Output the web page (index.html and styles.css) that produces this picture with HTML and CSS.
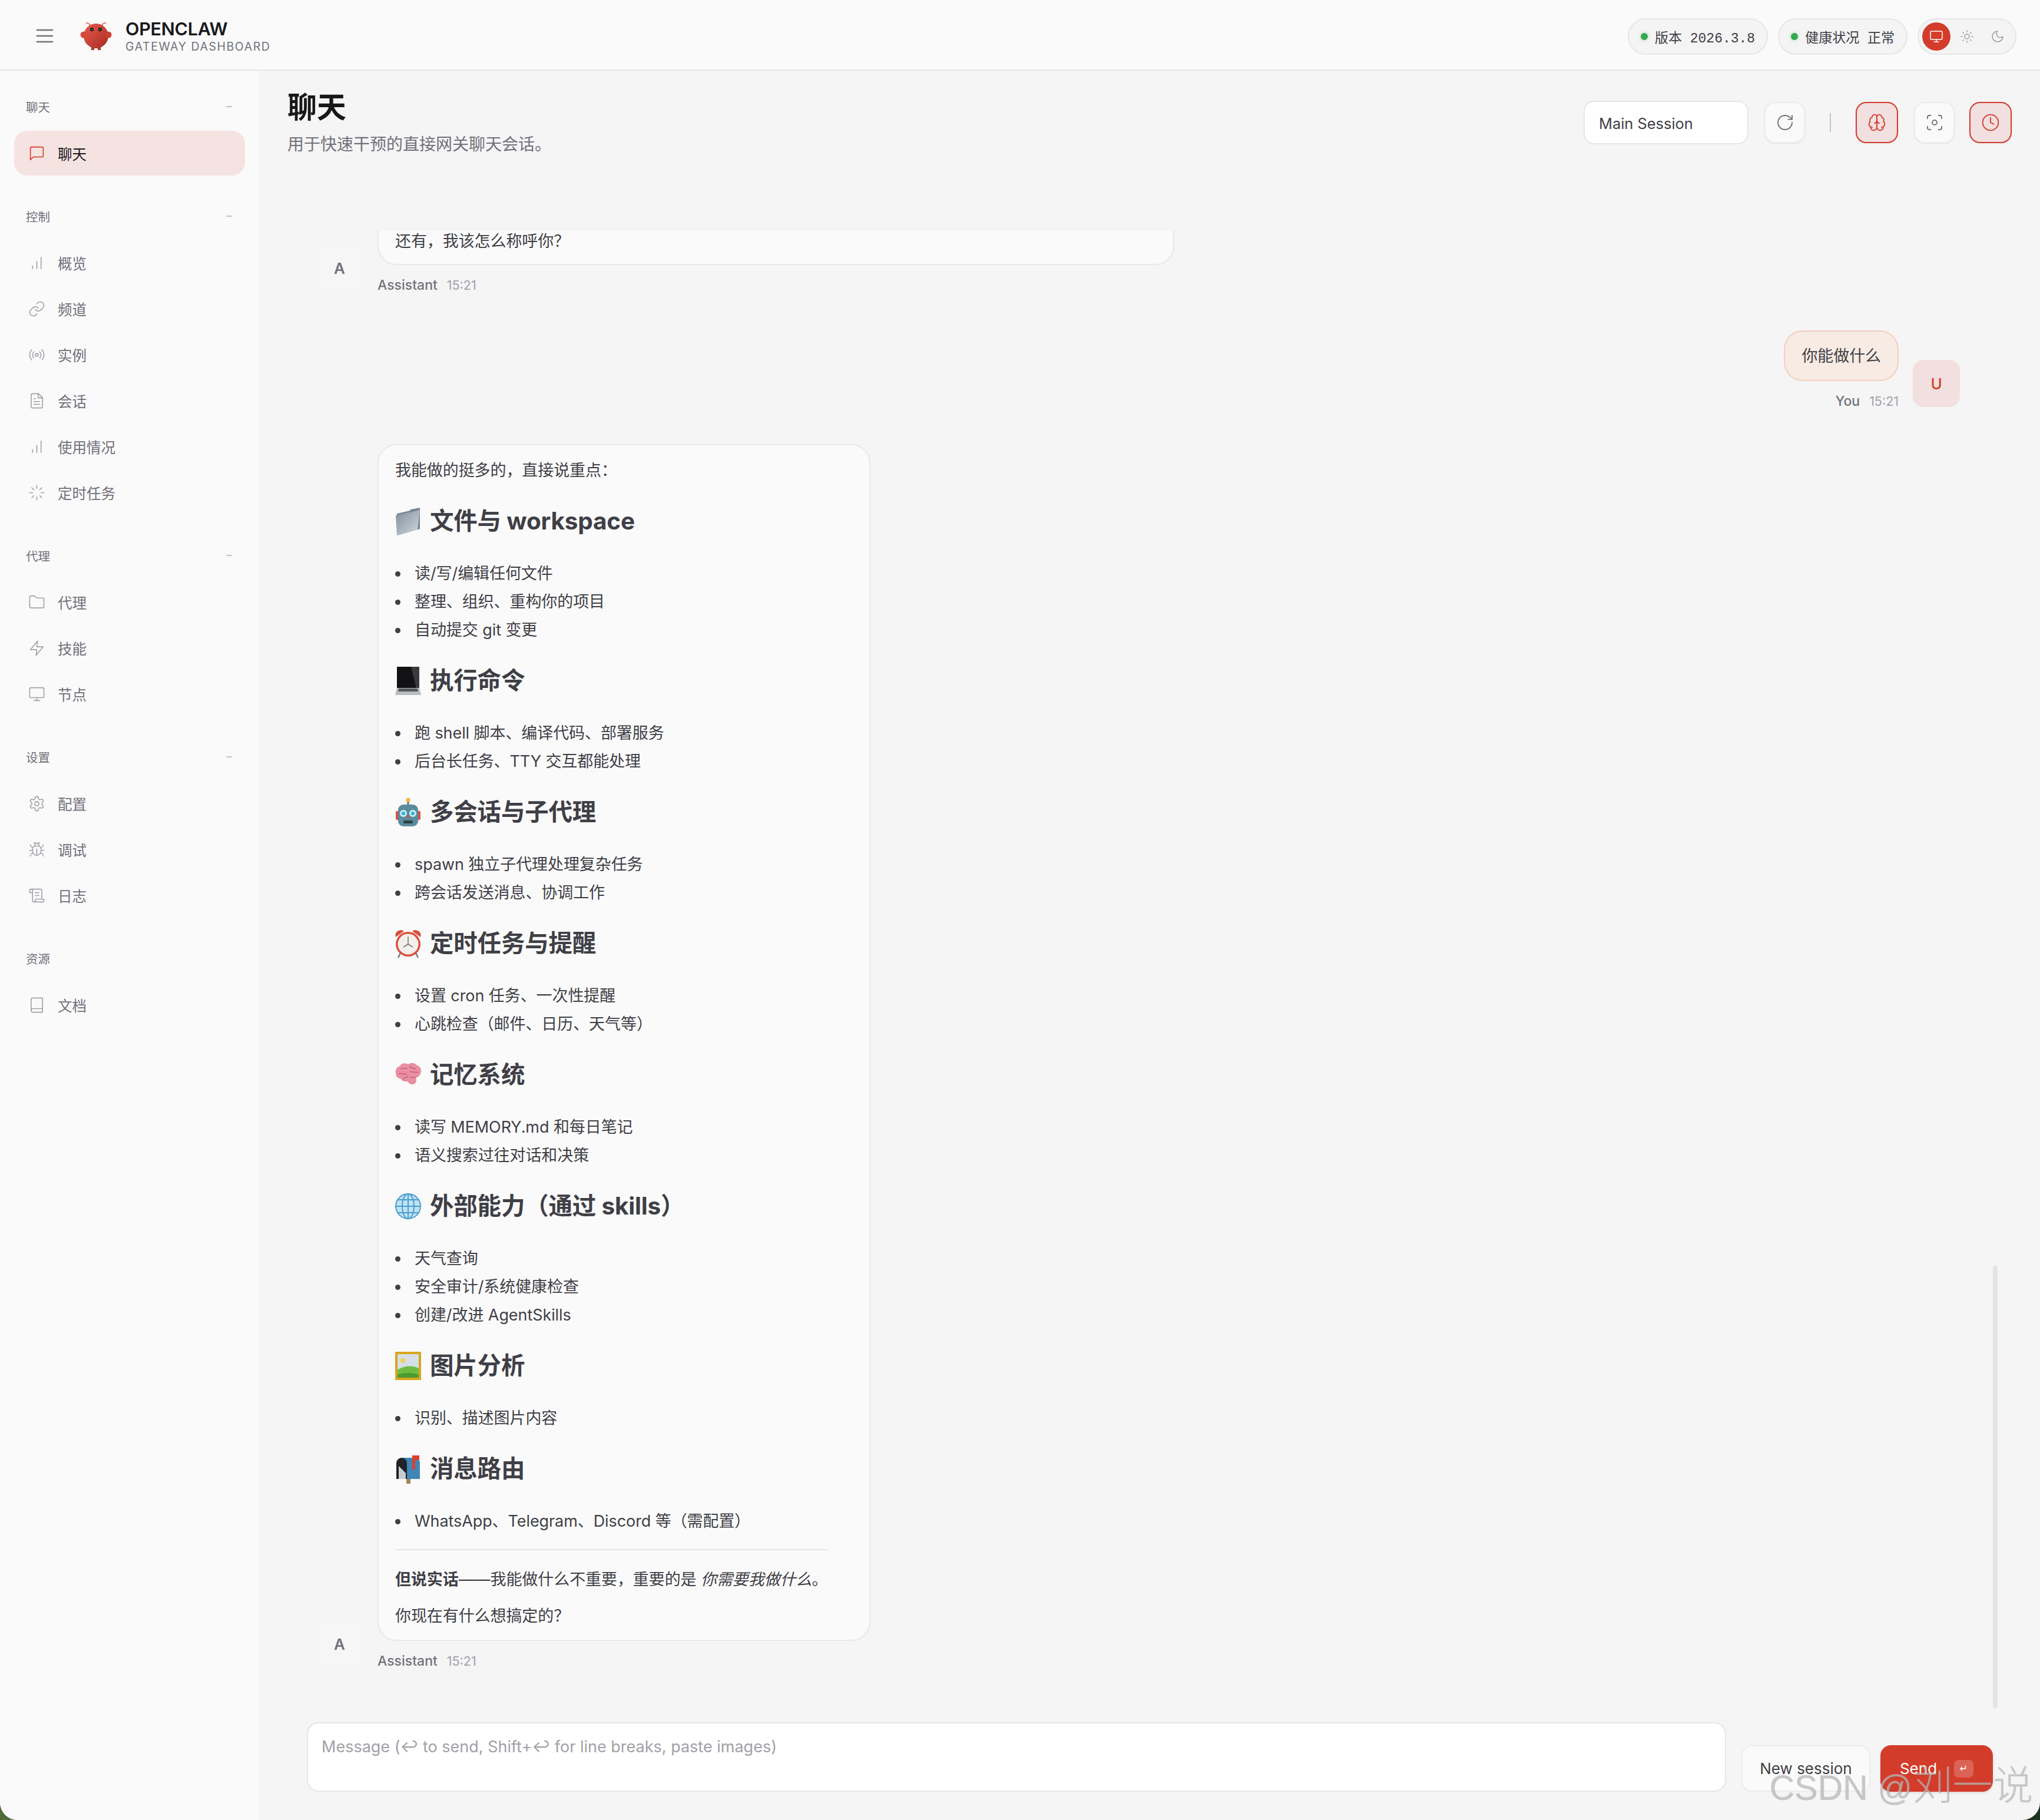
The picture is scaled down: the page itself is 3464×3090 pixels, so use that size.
FILE: index.html
```html
<!DOCTYPE html>
<html lang="zh-CN">
<head>
  <meta charset="UTF-8">
  <meta name="viewport" content="width=device-width, initial-scale=1.0">
  <title>OpenClaw</title>
  <link rel="stylesheet" href="styles.css">
</head>
<body>
  <svg class="sprite" xmlns="http://www.w3.org/2000/svg">
    <symbol id="i-menu" viewBox="0 0 24 24"><path d="M4 6h16M4 12h16M4 18h16"/></symbol>
    <symbol id="i-chat" viewBox="0 0 24 24"><path d="M21 15a2 2 0 0 1-2 2H7l-4 4V5a2 2 0 0 1 2-2h14a2 2 0 0 1 2 2z"/></symbol>
    <symbol id="i-bars" viewBox="0 0 24 24"><path d="M12 20V10M18 20V4M6 20v-4"/></symbol>
    <symbol id="i-link" viewBox="0 0 24 24"><path d="M10 13a5 5 0 0 0 7.54.54l3-3a5 5 0 0 0-7.07-7.07l-1.72 1.71"/><path d="M14 11a5 5 0 0 0-7.54-.54l-3 3a5 5 0 0 0 7.07 7.07l1.71-1.71"/></symbol>
    <symbol id="i-radio" viewBox="0 0 24 24"><path d="M4.9 19.1C1 15.2 1 8.8 4.9 4.9"/><path d="M7.8 16.2c-2.3-2.3-2.3-6.1 0-8.5"/><circle cx="12" cy="12" r="2"/><path d="M16.2 7.8c2.3 2.3 2.3 6.1 0 8.5"/><path d="M19.1 4.9C23 8.8 23 15.1 19.1 19"/></symbol>
    <symbol id="i-file" viewBox="0 0 24 24"><path d="M14.5 2H6a2 2 0 0 0-2 2v16a2 2 0 0 0 2 2h12a2 2 0 0 0 2-2V7.5L14.5 2z"/><path d="M14 2v6h6M16 13H8M16 17H8M10 9H8"/></symbol>
    <symbol id="i-loader" viewBox="0 0 24 24"><path d="M12 2v4M12 18v4M4.93 4.93l2.83 2.83M16.24 16.24l2.83 2.83M2 12h4M18 12h4M4.93 19.07l2.83-2.83M16.24 7.76l2.83-2.83"/></symbol>
    <symbol id="i-folder" viewBox="0 0 24 24"><path d="M20 20a2 2 0 0 0 2-2V8a2 2 0 0 0-2-2h-7.93a2 2 0 0 1-1.66-.9l-.82-1.2A2 2 0 0 0 7.93 3H4a2 2 0 0 0-2 2v13c0 1.1.9 2 2 2Z"/></symbol>
    <symbol id="i-zap" viewBox="0 0 24 24"><path d="M13 2 3 14h9l-1 8 10-12h-9l1-8z"/></symbol>
    <symbol id="i-monitor" viewBox="0 0 24 24"><rect x="2" y="3" width="20" height="14" rx="2"/><path d="M8 21h8M12 17v4"/></symbol>
    <symbol id="i-gear" viewBox="0 0 24 24"><path d="M12.22 2h-.44a2 2 0 0 0-2 2v.18a2 2 0 0 1-1 1.73l-.43.25a2 2 0 0 1-2 0l-.15-.08a2 2 0 0 0-2.73.73l-.22.38a2 2 0 0 0 .73 2.73l.15.1a2 2 0 0 1 1 1.72v.51a2 2 0 0 1-1 1.74l-.15.09a2 2 0 0 0-.73 2.73l.22.38a2 2 0 0 0 2.73.73l.15-.08a2 2 0 0 1 2 0l.43.25a2 2 0 0 1 1 1.73V20a2 2 0 0 0 2 2h.44a2 2 0 0 0 2-2v-.18a2 2 0 0 1 1-1.73l.43-.25a2 2 0 0 1 2 0l.15.08a2 2 0 0 0 2.73-.73l.22-.39a2 2 0 0 0-.73-2.73l-.15-.08a2 2 0 0 1-1-1.74v-.5a2 2 0 0 1 1-1.74l.15-.09a2 2 0 0 0 .73-2.73l-.22-.38a2 2 0 0 0-2.73-.73l-.15.08a2 2 0 0 1-2 0l-.43-.25a2 2 0 0 1-1-1.73V4a2 2 0 0 0-2-2z"/><circle cx="12" cy="12" r="3"/></symbol>
    <symbol id="i-bug" viewBox="0 0 24 24"><path d="m8 2 1.88 1.88M14.12 3.88 16 2M9 7.13v-1a3.003 3.003 0 1 1 6 0v1"/><path d="M12 20c-3.3 0-6-2.7-6-6v-3a4 4 0 0 1 4-4h4a4 4 0 0 1 4 4v3c0 3.3-2.7 6-6 6M12 20v-9"/><path d="M6.53 9C4.6 8.8 3 7.1 3 5M6 13H2M3 21c0-2.1 1.7-3.9 3.8-4M20.97 5c0 2.1-1.6 3.8-3.5 4M22 13h-4M17.2 17c2.1.1 3.8 1.9 3.8 4"/></symbol>
    <symbol id="i-scroll" viewBox="0 0 24 24"><path d="M15 12h-5M15 8h-5M19 17V5a2 2 0 0 0-2-2H4"/><path d="M8 21h12a2 2 0 0 0 2-2v-1a1 1 0 0 0-1-1H11a1 1 0 0 0-1 1v1a2 2 0 1 1-4 0V5a2 2 0 1 0-4 0v2a1 1 0 0 0 1 1h3"/></symbol>
    <symbol id="i-book" viewBox="0 0 24 24"><path d="M4 19.5v-15A2.5 2.5 0 0 1 6.5 2H20v20H6.5a2.5 2.5 0 0 1 0-5H20"/></symbol>
    <symbol id="i-sun" viewBox="0 0 24 24"><circle cx="12" cy="12" r="4"/><path d="M12 2v2M12 20v2M4.93 4.93l1.41 1.41M17.66 17.66l1.41 1.41M2 12h2M20 12h2M6.34 17.66l-1.41 1.41M19.07 4.93l-1.41 1.41"/></symbol>
    <symbol id="i-moon" viewBox="0 0 24 24"><path d="M12 3a6 6 0 0 0 9 9 9 9 0 1 1-9-9Z"/></symbol>
    <symbol id="i-refresh" viewBox="0 0 24 24"><path d="M21 12a9 9 0 1 1-9-9c2.52 0 4.93 1 6.74 2.74L21 8"/><path d="M21 3v5h-5"/></symbol>
    <symbol id="i-brain" viewBox="0 0 24 24"><path d="M12 5a3 3 0 1 0-5.997.125 4 4 0 0 0-2.526 5.77 4 4 0 0 0 .556 6.588A4 4 0 1 0 12 18Z"/><path d="M12 5a3 3 0 1 1 5.997.125 4 4 0 0 1 2.526 5.77 4 4 0 0 1-.556 6.588A4 4 0 1 1 12 18Z"/><path d="M15 13a4.5 4.5 0 0 1-3-4 4.5 4.5 0 0 1-3 4M12 18V9M6 18a4 4 0 0 1-1.967-.516M19.967 17.484A4 4 0 0 1 18 18"/></symbol>
    <symbol id="i-focus" viewBox="0 0 24 24"><path d="M3 7V5a2 2 0 0 1 2-2h2M17 3h2a2 2 0 0 1 2 2v2M21 17v2a2 2 0 0 1-2 2h-2M7 21H5a2 2 0 0 1-2-2v-2"/><circle cx="12" cy="12" r="3"/></symbol>
    <symbol id="i-clock" viewBox="0 0 24 24"><circle cx="12" cy="12" r="10"/><path d="M12 6v6l4 2"/></symbol>
    <linearGradient id="logo-fill" x1="0" y1="0" x2="1" y2="1"><stop offset="0" stop-color="#ea5a4b"/><stop offset="1" stop-color="#a42c22"/></linearGradient>
    <linearGradient id="folder-fill" x1="0" y1="0" x2="1" y2="1"><stop offset="0" stop-color="#7f8c9a"/><stop offset="1" stop-color="#d3dae1"/></linearGradient>
    <symbol id="e-folder" viewBox="0 0 44 50"><path d="M3 12l22-5 1-2 16-3v36L3 49z" fill="#78848f"/><path d="M1 15l41-9-4 33L3 49z" fill="url(#folder-fill)"/></symbol>
    <symbol id="e-laptop" viewBox="0 0 44 50"><path d="M3 1h38v37H3z" fill="#121214"/><path d="M27 1h14v37H36z" fill="#3a3a3e"/><path d="M3 37h38l3 12H0z" fill="#b9bbbe"/><path d="M6 38h32l1 5H5z" fill="#55575a"/></symbol>
    <symbol id="e-robot" viewBox="0 0 44 50"><rect x="20" y="4" width="4" height="9" fill="#8a8a8a"/><circle cx="22" cy="4" r="3.5" fill="#f2b53c"/><rect x="1" y="23" width="6" height="15" rx="2" fill="#d9503f"/><rect x="37" y="23" width="6" height="15" rx="2" fill="#d9503f"/><rect x="5" y="12" width="34" height="37" rx="9" fill="#5b8b9c"/><circle cx="14" cy="27" r="6" fill="#c8eef7"/><circle cx="30" cy="27" r="6" fill="#c8eef7"/><circle cx="14" cy="27" r="3" fill="#2fb1d6"/><circle cx="30" cy="27" r="3" fill="#2fb1d6"/><path d="M22 29l3 5h-6z" fill="#d9503f"/><rect x="14" y="39" width="16" height="5" rx="2" fill="#2d3f47"/></symbol>
    <symbol id="e-alarm" viewBox="0 0 44 50"><path d="M1 14a9 9 0 0 1 14-10zM43 14a9 9 0 0 0-14-10z" fill="#d9503f"/><path d="M9 41l-4 8M35 41l4 8" stroke="#777" stroke-width="2.5"/><circle cx="22" cy="26" r="21" fill="#d9503f"/><circle cx="22" cy="26" r="17.5" fill="#f3efec"/><path d="M22 13v13l-8 5M22 26l8 5" stroke="#777" stroke-width="1.6" fill="none"/></symbol>
    <symbol id="e-brain" viewBox="0 0 44 50"><path d="M22 7c-5-3-12-2-14 3-5 1-8 6-7 12 0 6 4 9 9 10 2 4 7 5 11 4 3 5 9 7 13 3 3-3 2-7 1-9 5-1 9-6 9-12 0-6-4-9-8-10-3-4-9-4-14-1z" fill="#ea8fa3"/><path d="M9 15c4-3 8 0 12-1M6 23c5-2 9 2 14 0M13 32c3-3 7-2 9-5M24 10c2 4 8 3 11 5M25 20c4-2 8 2 14 0M26 29c3-1 6 1 9 0" stroke="#c75f7a" stroke-width="1.5" fill="none"/></symbol>
    <symbol id="e-globe" viewBox="0 0 44 50"><circle cx="22" cy="25" r="21" fill="#bfe3f5"/><g fill="none" stroke="#4a9ccd" stroke-width="2"><circle cx="22" cy="25" r="21"/><ellipse cx="22" cy="25" rx="10" ry="21"/><path d="M22 4v42M1 25h42M4 14h36M4 36h36"/></g></symbol>
    <symbol id="e-picture" viewBox="0 0 44 50"><rect x="0" y="1" width="44" height="48" fill="#d9a520"/><rect x="4" y="5" width="36" height="40" fill="#d5dfe6"/><circle cx="13" cy="16" r="4" fill="#f3d24c"/><path d="M4 32c9-7 24-9 36-3v16H4z" fill="#6ebb3f"/><path d="M4 40c12-4 24-4 36 0v5H4z" fill="#4b9a2e"/></symbol>
    <symbol id="e-mailbox" viewBox="0 0 44 50"><rect x="19" y="38" width="7" height="12" fill="#a8844f"/><path d="M13 6h20a9 9 0 0 1 9 9v27H13z" fill="#3f86b4"/><path d="M2 15a9 9 0 0 1 18 0v27H2z" fill="#1e2328"/><path d="M6 20l12 12v10H6z" fill="#c9ccd0"/><rect x="29" y="2" width="5" height="24" fill="#d9402f"/><rect x="29" y="2" width="12" height="8" fill="#d9402f"/></symbol>
  </svg>

  <div id="root">
    <header class="topbar">
      <div class="brand">
        <svg class="icon menu-icon"><use href="#i-menu"/></svg>
        <svg class="logo" viewBox="0 0 54 50">
          <path d="M17 7c-1-3-4-4-7-4M37 7c1-3 4-4 7-4" fill="none" stroke="#d9503f" stroke-width="1.5"/>
          <rect x="19" y="40" width="5" height="9" fill="#b5352a"/>
          <rect x="30" y="40" width="5" height="9" fill="#b5352a"/>
          <circle cx="27" cy="25" r="21" fill="url(#logo-fill)"/>
          <circle cx="6" cy="23" r="5.5" fill="#d9473a"/>
          <circle cx="48" cy="23" r="5.5" fill="#c83f32"/>
          <circle cx="20" cy="14" r="3" fill="#111"/><circle cx="34" cy="14" r="3" fill="#111"/>
          <circle cx="20" cy="14" r="1.1" fill="#35d6d6"/><circle cx="34" cy="14" r="1.1" fill="#35d6d6"/>
        </svg>
        <div class="brand-text">
          <div class="brand-name">OPENCLAW</div>
          <div class="brand-sub">GATEWAY DASHBOARD</div>
        </div>
      </div>
      <div class="top-status">
        <div class="pill"><span class="dot"></span><span>版本 2026.3.8</span></div>
        <div class="pill"><span class="dot"></span><span>健康状况 正常</span></div>
        <div class="pill theme-pill">
          <span class="theme-btn active"><svg class="icon"><use href="#i-monitor"/></svg></span>
          <span class="theme-btn"><svg class="icon"><use href="#i-sun"/></svg></span>
          <span class="theme-btn"><svg class="icon"><use href="#i-moon"/></svg></span>
        </div>
      </div>
    </header>

    <div class="layout">
      <nav class="sidebar">
        <div class="nav-group">
          <div class="nav-label"><span>聊天</span><i class="collapse"></i></div>
          <a class="nav-item active"><svg class="icon"><use href="#i-chat"/></svg>聊天</a>
        </div>
        <div class="nav-group">
          <div class="nav-label"><span>控制</span><i class="collapse"></i></div>
          <a class="nav-item"><svg class="icon"><use href="#i-bars"/></svg>概览</a>
          <a class="nav-item"><svg class="icon"><use href="#i-link"/></svg>频道</a>
          <a class="nav-item"><svg class="icon"><use href="#i-radio"/></svg>实例</a>
          <a class="nav-item"><svg class="icon"><use href="#i-file"/></svg>会话</a>
          <a class="nav-item"><svg class="icon"><use href="#i-bars"/></svg>使用情况</a>
          <a class="nav-item"><svg class="icon"><use href="#i-loader"/></svg>定时任务</a>
        </div>
        <div class="nav-group">
          <div class="nav-label"><span>代理</span><i class="collapse"></i></div>
          <a class="nav-item"><svg class="icon"><use href="#i-folder"/></svg>代理</a>
          <a class="nav-item"><svg class="icon"><use href="#i-zap"/></svg>技能</a>
          <a class="nav-item"><svg class="icon"><use href="#i-monitor"/></svg>节点</a>
        </div>
        <div class="nav-group">
          <div class="nav-label"><span>设置</span><i class="collapse"></i></div>
          <a class="nav-item"><svg class="icon"><use href="#i-gear"/></svg>配置</a>
          <a class="nav-item"><svg class="icon"><use href="#i-bug"/></svg>调试</a>
          <a class="nav-item"><svg class="icon"><use href="#i-scroll"/></svg>日志</a>
        </div>
        <div class="nav-group">
          <div class="nav-label"><span>资源</span></div>
          <a class="nav-item"><svg class="icon"><use href="#i-book"/></svg>文档</a>
        </div>
      </nav>

      <main class="main">
        <div class="page-head">
          <div>
            <h1 class="page-title">聊天</h1>
            <div class="page-sub">用于快速干预的直接网关聊天会话。</div>
          </div>
          <div class="page-tools">
            <div class="session-select">Main Session</div>
            <button class="tool-btn"><svg class="icon"><use href="#i-refresh"/></svg></button>
            <span class="tool-sep"></span>
            <button class="tool-btn on"><svg class="icon"><use href="#i-brain"/></svg></button>
            <button class="tool-btn"><svg class="icon"><use href="#i-focus"/></svg></button>
            <button class="tool-btn on"><svg class="icon"><use href="#i-clock"/></svg></button>
          </div>
        </div>

        <div class="thread">
          <div class="msg">
            <div class="avatar">A</div>
            <div class="msg-body">
              <div class="bubble bubble-wide"><p>还有，我该怎么称呼你？</p></div>
              <div class="meta"><span class="meta-name">Assistant</span><span class="meta-time">15:21</span></div>
            </div>
          </div>

          <div class="msg msg-user">
            <div class="msg-body">
              <div class="bubble bubble-user">你能做什么</div>
              <div class="meta"><span class="meta-name">You</span><span class="meta-time">15:21</span></div>
            </div>
            <div class="avatar avatar-user">U</div>
          </div>

          <div class="msg">
            <div class="avatar">A</div>
            <div class="msg-body">
              <div class="bubble bubble-long">
                <p>我能做的挺多的，直接说重点：</p>
                <h2><svg class="emoji"><use href="#e-folder"/></svg><span>文件与 workspace</span></h2>
                <ul>
                  <li>读/写/编辑任何文件</li>
                  <li>整理、组织、重构你的项目</li>
                  <li>自动提交 git 变更</li>
                </ul>
                <h2><svg class="emoji"><use href="#e-laptop"/></svg><span>执行命令</span></h2>
                <ul>
                  <li>跑 shell 脚本、编译代码、部署服务</li>
                  <li>后台长任务、TTY 交互都能处理</li>
                </ul>
                <h2><svg class="emoji"><use href="#e-robot"/></svg><span>多会话与子代理</span></h2>
                <ul>
                  <li>spawn 独立子代理处理复杂任务</li>
                  <li>跨会话发送消息、协调工作</li>
                </ul>
                <h2><svg class="emoji"><use href="#e-alarm"/></svg><span>定时任务与提醒</span></h2>
                <ul>
                  <li>设置 cron 任务、一次性提醒</li>
                  <li>心跳检查（邮件、日历、天气等）</li>
                </ul>
                <h2><svg class="emoji"><use href="#e-brain"/></svg><span>记忆系统</span></h2>
                <ul>
                  <li>读写 MEMORY.md 和每日笔记</li>
                  <li>语义搜索过往对话和决策</li>
                </ul>
                <h2><svg class="emoji"><use href="#e-globe"/></svg><span>外部能力（通过 skills）</span></h2>
                <ul>
                  <li>天气查询</li>
                  <li>安全审计/系统健康检查</li>
                  <li>创建/改进 AgentSkills</li>
                </ul>
                <h2><svg class="emoji"><use href="#e-picture"/></svg><span>图片分析</span></h2>
                <ul>
                  <li>识别、描述图片内容</li>
                </ul>
                <h2><svg class="emoji"><use href="#e-mailbox"/></svg><span>消息路由</span></h2>
                <ul>
                  <li>WhatsApp、Telegram、Discord 等（需配置）</li>
                </ul>
                <hr>
                <p><strong>但说实话</strong>——我能做什么不重要，重要的是 <em>你需要我做什么</em>。</p>
                <p>你现在有什么想搞定的？</p>
              </div>
              <div class="meta"><span class="meta-name">Assistant</span><span class="meta-time">15:21</span></div>
            </div>
          </div>
        </div>

        <div class="composer">
          <div class="composer-input">Message (↩ to send, Shift+↩ for line breaks, paste images)</div>
          <button class="btn">New session</button>
          <button class="btn btn-send">Send<kbd>↵</kbd></button>
        </div>

        <div class="scroll-thumb"></div>
      </main>
    </div>

    <div class="watermark">CSDN @<span class="watermark-cjk">刘一说</span></div>
  </div>
</body>
</html>
```

FILE: styles.css
```css
* {
  box-sizing: border-box;
}
html, body {
  margin: 0;
  padding: 0;
  height: 100%;
}
body {
  background: linear-gradient(90deg, #4f6b38, #1d3320);
  font-family: Inter, "Noto Sans CJK SC", sans-serif;
  color: #3f3f46;
}
.sprite {
  position: absolute;
  width: 0;
  height: 0;
}
.icon {
  width: 26px;
  height: 26px;
  flex: none;
  fill: none;
  stroke: currentColor;
  stroke-width: 1.5;
  stroke-linecap: round;
  stroke-linejoin: round;
}
#root {
  position: relative;
  display: flex;
  flex-direction: column;
  height: 3090px;
  overflow: hidden;
  border-radius: 0 0 30px 30px;
  background: #f5f5f5;
}

/* top bar */
.topbar {
  display: flex;
  justify-content: space-between;
  align-items: center;
  flex: none;
  height: 120px;
  padding: 4px 40px 0 56px;
  background: #fafafa;
  border-bottom: 2px solid #e6e6e6;
}
.brand {
  display: flex;
  align-items: center;
}
.menu-icon {
  width: 40px;
  height: 40px;
  color: #71717a;
  stroke-width: 1.4;
}
.logo {
  width: 54px;
  height: 50px;
  margin: 0 23px 0 40px;
}
.brand-name {
  font-size: 30.5px;
  line-height: 37px;
  font-weight: 600;
  color: #18181b;
  letter-spacing: -0.3px;
}
.brand-sub {
  font-size: 19.5px;
  line-height: 25px;
  color: #71717a;
  letter-spacing: 1.55px;
}
.top-status {
  display: flex;
  gap: 17px;
  margin-top: 2px;
}
.pill {
  display: flex;
  align-items: center;
  gap: 12px;
  height: 62px;
  padding: 0 20px;
  border: 2px solid #e6e6e6;
  border-radius: 31px;
  background: #f4f4f4;
  font-family: "Liberation Mono", "Noto Sans CJK SC", monospace;
  font-size: 23px;
  color: #3f3f46;
}
.dot {
  width: 12px;
  height: 12px;
  border-radius: 50%;
  background: #34a853;
  box-shadow: 0 0 6px rgba(52, 168, 83, .35);
}
.theme-pill {
  gap: 4px;
  padding: 0 6px;
}
.theme-btn {
  display: flex;
  justify-content: center;
  align-items: center;
  width: 48px;
  height: 48px;
  border-radius: 50%;
  color: #9a9aa2;
}
.theme-btn .icon {
  width: 24px;
  height: 24px;
}
.theme-btn.active {
  background: #d33c2b;
  color: #fff;
}

/* sidebar */
.layout {
  display: flex;
  flex: 1;
  min-height: 0;
}
.sidebar {
  flex: none;
  width: 440px;
  padding: 47px 24px 0;
  background: #fafafa;
}
.nav-group {
  margin-bottom: 55px;
}
.nav-label {
  display: flex;
  justify-content: space-between;
  align-items: center;
  height: 28px;
  margin-bottom: 27px;
  padding: 0 22px 0 20px;
  font-size: 20.5px;
  color: #71717a;
}
.collapse {
  width: 10px;
  height: 2px;
  background: #c4c4c8;
}
.nav-item {
  display: flex;
  align-items: center;
  gap: 23px;
  height: 76px;
  margin-bottom: 2px;
  padding: 0 25px;
  border-radius: 22px;
  font-size: 24.5px;
  color: #71717a;
}
.nav-item:last-child {
  margin-bottom: 0;
}
.nav-item .icon {
  width: 29px;
  height: 29px;
  margin: 0 -1.5px;
  color: #a1a1aa;
  stroke-width: 1.35;
}
.nav-item.active {
  background: #f5e3e2;
  color: #18181b;
}
.nav-item.active .icon {
  color: #d33c2b;
}

/* page head */
.main {
  position: relative;
  display: flex;
  flex-direction: column;
  flex: 1;
  min-width: 0;
}
.page-head {
  display: flex;
  justify-content: space-between;
  align-items: flex-start;
  flex: none;
  height: 272px;
  padding: 30px 48px 0;
}
.page-title {
  margin: 0;
  font-size: 50px;
  line-height: 64px;
  font-weight: 700;
  color: #18181b;
}
.page-sub {
  margin-top: 12px;
  font-size: 28px;
  line-height: 38px;
  color: #71717a;
}
.page-tools {
  display: flex;
  align-items: center;
  gap: 27px;
  padding-top: 21px;
}
.session-select {
  display: flex;
  align-items: center;
  width: 280px;
  height: 74px;
  padding: 2px 24px 0;
  border: 2px solid #e6e6e6;
  border-radius: 18px;
  background: #fff;
  font-size: 25.4px;
  color: #3f3f46;
}
.tool-btn {
  display: flex;
  justify-content: center;
  align-items: center;
  width: 69px;
  height: 70px;
  padding: 0;
  border: 2px solid #ececec;
  border-radius: 18px;
  background: #fafafa;
  color: #71717a;
  box-shadow: 0 1px 3px rgba(0, 0, 0, .08);
}
.tool-btn:last-child {
  margin-left: -2px;
}
.tool-btn .icon {
  width: 32px;
  height: 32px;
  stroke-width: 1.4;
}
.tool-btn.on {
  width: 72px;
  border-color: #d33c2b;
  background: #f2dfdf;
  color: #d33c2b;
}
.tool-sep {
  width: 2px;
  height: 32px;
  margin: 0 15px;
  background: #c4c4c8;
}

/* thread */
.thread {
  display: flex;
  flex-direction: column;
  justify-content: flex-end;
  flex: 1;
  min-height: 0;
  overflow: hidden;
  padding: 0 136px 89px 97px;
}
.msg {
  display: flex;
  align-items: flex-end;
  gap: 25px;
  flex: none;
}
.msg-user {
  justify-content: flex-end;
  gap: 24px;
  margin: 62px 0 58px;
}
.avatar {
  display: flex;
  justify-content: center;
  align-items: center;
  flex: none;
  width: 79px;
  height: 79px;
  margin-bottom: 4px;
  border-radius: 18px;
  background: #f6f6f6;
  font-size: 26px;
  font-weight: 600;
  color: #71717a;
}
.avatar-user {
  width: 80px;
  height: 80px;
  margin-bottom: 5px;
  background: #f2dfdf;
  color: #d33c2b;
  font-weight: 500;
}
.bubble {
  padding: 22px 30px 18px 28px;
  border: 2px solid #e8e8e8;
  border-radius: 32px;
  background: #fafafa;
  font-size: 27px;
  line-height: 41px;
  letter-spacing: -0.08px;
}
.bubble p {
  margin: 0;
}
.bubble-wide {
  width: 1353px;
  padding-top: 60px;
  padding-bottom: 18px;
}
.bubble-user {
  padding: 20.5px 28px;
  border-color: #f3d0bc;
  background: #f7ebe3;
  text-align: center;
}
.bubble-long {
  width: 837px;
  padding-bottom: 20px;
}
.bubble-long h2 {
  display: flex;
  align-items: center;
  gap: 15px;
  height: 50px;
  margin: 41px 0 43px;
  font-size: 40.5px;
  line-height: 50px;
  font-weight: 700;
  letter-spacing: -0.2px;
}
.emoji {
  flex: none;
  width: 44px;
  height: 50px;
}
.bubble-long ul {
  margin: 0;
  padding: 0 0 0 33px;
  list-style: none;
}
.bubble-long li::before {
  content: "";
  display: inline-block;
  width: 9px;
  height: 9px;
  margin: 0 24px 0 -33px;
  border-radius: 50%;
  background: #3f3f46;
  vertical-align: 4px;
}
.bubble-long li + li {
  margin-top: 7px;
}
.bubble-long hr {
  width: 735px;
  height: 2px;
  margin: 27px 0 29px;
  border: 0;
  background: #e6e6e6;
}
.bubble-long p + p {
  margin-top: 21px;
}
.bubble-long strong {
  font-weight: 700;
}
.meta {
  display: flex;
  align-items: center;
  gap: 16px;
  height: 30px;
  margin-top: 19px;
}
.msg-user .meta {
  justify-content: flex-end;
}
.meta-name {
  font-size: 23px;
  font-weight: 500;
  color: #71717a;
}
.meta-time {
  font-size: 21.5px;
  color: #a1a1aa;
}

/* composer */
.composer {
  display: flex;
  align-items: flex-end;
  flex: none;
  padding: 0 80px 48px 81px;
}
.composer-input {
  flex: 1;
  height: 118px;
  padding: 20px 23px;
  border: 2px solid #e6e6e6;
  border-radius: 20px;
  background: #fff;
  font-size: 27px;
  line-height: 40px;
  color: #a1a1a6;
}
.btn {
  display: flex;
  justify-content: center;
  align-items: center;
  width: 219px;
  height: 79px;
  margin-left: 26px;
  padding: 0;
  border: 2px solid #ececec;
  border-radius: 18px;
  background: #fafafa;
  font-family: inherit;
  font-size: 26px;
  color: #3f3f46;
}
.btn-send {
  gap: 29px;
  width: 191px;
  margin-left: 17px;
  border: 0;
  background: #d33c2b;
  color: #fff;
  box-shadow: 0 2px 4px rgba(0, 0, 0, .12);
}
.btn-send kbd {
  display: flex;
  justify-content: center;
  align-items: center;
  width: 33px;
  height: 30px;
  border-radius: 8px;
  background: rgba(255, 255, 255, .2);
  font-family: "DejaVu Sans", sans-serif;
  font-size: 16px;
}
.scroll-thumb {
  position: absolute;
  top: 2029px;
  right: 72px;
  bottom: 190px;
  width: 8px;
  border-radius: 4px;
  background: #e4e4e4;
}

/* watermark sits on top of everything */
.watermark {
  position: absolute;
  left: 3004px;
  top: 2996px;
  font-family: "Liberation Sans", "Noto Sans CJK SC", sans-serif;
  font-size: 59px;
  line-height: 70px;
  font-weight: 400;
  white-space: nowrap;
  color: rgba(196, 196, 196, .62);
  text-shadow: 1px 1px 0 rgba(120, 120, 120, .35);
}
.watermark-cjk {
  font-size: 68px;
  font-weight: 300;
}
```
